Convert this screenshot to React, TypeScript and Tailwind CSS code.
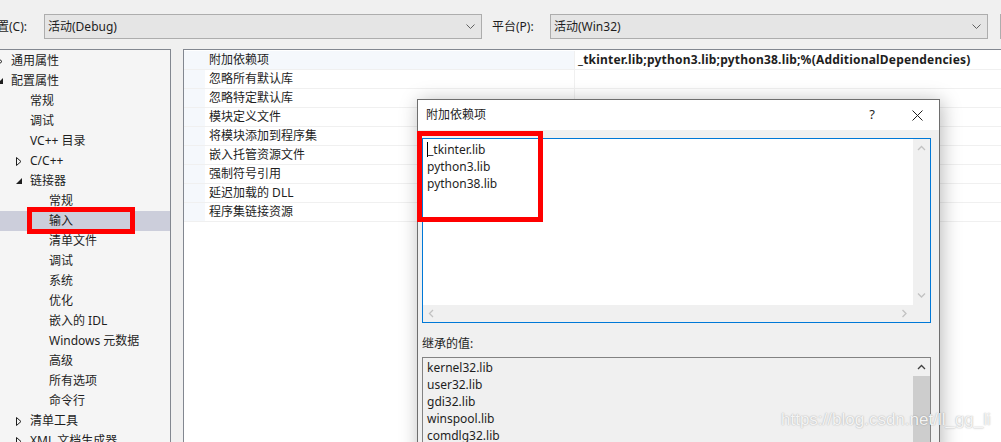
import React from "react";

type Dir = "up" | "down" | "left" | "right";

const Chevron = ({ dir, color }: { dir: Dir; color: string }) => {
  const d = {
    up: "M1 5 L4.5 1.5 L8 5",
    down: "M1 1.5 L4.5 5 L8 1.5",
    left: "M5 1 L1.5 4.5 L5 8",
    right: "M1.5 1 L5 4.5 L1.5 8",
  }[dir];
  const vertical = dir === "up" || dir === "down";
  return (
    <svg
      width={vertical ? 9 : 7}
      height={vertical ? 7 : 9}
      viewBox={vertical ? "0 0 9 7" : "0 0 7 9"}
      fill="none"
    >
      <path d={d} stroke={color} strokeWidth="1.3" />
    </svg>
  );
};

type TreeItem = {
  label: string;
  level: 0 | 1 | 2;
  arrow?: "closed" | "open";
  selected?: boolean;
};

const tree: TreeItem[] = [
  { label: "通用属性", level: 0, arrow: "closed" },
  { label: "配置属性", level: 0, arrow: "open" },
  { label: "常规", level: 1 },
  { label: "调试", level: 1 },
  { label: "VC++ 目录", level: 1 },
  { label: "C/C++", level: 1, arrow: "closed" },
  { label: "链接器", level: 1, arrow: "open" },
  { label: "常规", level: 2 },
  { label: "输入", level: 2, selected: true },
  { label: "清单文件", level: 2 },
  { label: "调试", level: 2 },
  { label: "系统", level: 2 },
  { label: "优化", level: 2 },
  { label: "嵌入的 IDL", level: 2 },
  { label: "Windows 元数据", level: 2 },
  { label: "高级", level: 2 },
  { label: "所有选项", level: 2 },
  { label: "命令行", level: 2 },
  { label: "清单工具", level: 1, arrow: "closed" },
  { label: "XML 文档生成器", level: 1, arrow: "closed" },
];

const indent = ["-ml-[8px]", "ml-[11px]", "ml-[30px]"];

const props = [
  "附加依赖项",
  "忽略所有默认库",
  "忽略特定默认库",
  "模块定义文件",
  "将模块添加到程序集",
  "嵌入托管资源文件",
  "强制符号引用",
  "延迟加载的 DLL",
  "程序集链接资源",
];

const inherited = [
  "kernel32.lib",
  "user32.lib",
  "gdi32.lib",
  "winspool.lib",
  "comdlg32.lib",
  "advapi32.lib",
];

const Combo = ({ text }: { text: string }) => (
  <div className="w-[438px] h-[25px] border border-[#adadad] bg-[#e5e5e5] flex items-center justify-between pl-[3px] pr-[6px]">
    <span>{text}</span>
    <svg width="9" height="5" viewBox="0 0 9 5" fill="none">
      <path d="M0.5 0.5 L4.5 4.5 L8.5 0.5" stroke="#606060" strokeWidth="1" />
    </svg>
  </div>
);

const App = () => {
  return (
    <div className="relative w-[1001px] h-[442px] overflow-hidden bg-[#f0f0f0] text-[12px] text-[#1e1e1e] font-['Noto_Sans','Noto_Sans_CJK_SC',sans-serif]">
      {/* top bar */}
      <div className="flex items-start h-[49px] pt-[14px]">
        <div className="w-[44px] leading-[25px] whitespace-nowrap overflow-hidden">
          <span className="-ml-[15px]">配置(C):</span>
        </div>
        <Combo text="活动(Debug)" />
        <div className="ml-[10px] w-[58px] leading-[25px]">平台(P):</div>
        <Combo text="活动(Win32)" />
        <div className="ml-[12px] w-[1px] h-[25px] bg-[#adadad]" />
      </div>

      {/* main area */}
      <div className="flex h-[393px]">
        <div className="w-[171px] pt-px border-t border-r border-[#828790] bg-[#f5f5f5] overflow-hidden">
          {tree.map((item, i) => (
            <div
              key={i}
              className={`h-[20px] ${item.selected ? "bg-[#cccedb]" : ""}`}
            >
              <div className={`flex items-center h-[20px] whitespace-nowrap ${indent[item.level]}`}>
                <span className="w-[19px] pl-[5px] flex items-center">
                  {item.arrow === "closed" && (
                    <svg width="6" height="9" viewBox="0 0 6 9" fill="none">
                      <path d="M0.5 0.5 L5 4.5 L0.5 8.5 Z" stroke="#1e1e1e" strokeWidth="1" />
                    </svg>
                  )}
                  {item.arrow === "open" && (
                    <svg width="6" height="6" viewBox="0 0 6 6">
                      <path d="M6 0 L6 6 L0 6 Z" fill="#1e1e1e" />
                    </svg>
                  )}
                </span>
                <span>{item.label}</span>
              </div>
            </div>
          ))}
        </div>

        <div className="ml-[12px] flex-1 border-t border-l border-[#828790] bg-white">
          {props.map((p, i) => (
            <div
              key={i}
              className={`flex border-b border-[#f0f0f0] ${i === 0 ? "h-[20px] pt-px" : "h-[19px]"}`}
            >
              <div className="w-[21px] bg-[#f5f8fc]" />
              <div
                className={`w-[370px] pl-[4px] flex items-center border-r border-[#f0f0f0] ${
                  i === 0 ? "bg-[#f5f8fc]" : ""
                }`}
              >
                {p}
              </div>
              <div className="flex-1 pl-[3px] flex items-center font-bold whitespace-nowrap tracking-[0.2px]">
                {i === 0 ? "_tkinter.lib;python3.lib;python38.lib;%(AdditionalDependencies)" : ""}
              </div>
            </div>
          ))}
        </div>
      </div>

      {/* red mark on tree */}
      <div className="absolute left-[27px] top-[207px] w-[108px] h-[27px] border-[5px] border-[#ff0000]" />

      {/* dialog */}
      <div className="absolute left-[417px] top-[99px] w-[523px] h-[360px] border border-[#6e6e6e] bg-[#f0f0f0] shadow-[2px_2px_18px_rgba(0,0,0,0.28)]">
        <div className="h-[30px] bg-white flex items-center justify-between">
          <span className="pl-[8px]">附加依赖项</span>
          <div className="flex h-full">
            <div className="w-[46px] flex items-center justify-center text-[13px]">?</div>
            <div className="w-[44px] flex items-center justify-center">
              <svg width="11" height="11" viewBox="0 0 11 11" fill="none">
                <path d="M0.5 0.5 L10.5 10.5 M10.5 0.5 L0.5 10.5" stroke="#1e1e1e" strokeWidth="1" />
              </svg>
            </div>
          </div>
        </div>

        <div className="pt-[8px] pl-[4px] pr-[8px]">
          {/* edit box */}
          <div className="h-[185px] border border-[#0078d7] flex flex-col">
            <div className="flex flex-1">
              <div className="flex-1 bg-white pl-[4px] pt-[2px] leading-[17px]">
                <div className="flex items-center">
                  <span className="w-px h-[15px] bg-black" />
                  <span>_tkinter.lib</span>
                </div>
                <div>python3.lib</div>
                <div>python38.lib</div>
              </div>
              <div className="w-[17px] bg-[#f0f0f0] flex flex-col justify-between items-center py-[6px]">
                <Chevron dir="up" color="#c2c2c2" />
                <Chevron dir="down" color="#c2c2c2" />
              </div>
            </div>
            <div className="h-[17px] flex">
              <div className="flex-1 flex items-center justify-between px-[5px]">
                <Chevron dir="left" color="#c2c2c2" />
                <Chevron dir="right" color="#c2c2c2" />
              </div>
              <div className="w-[17px]" />
            </div>
          </div>

          <div className="mt-[11px] h-[20px] leading-[20px]">继承的值:</div>

          <div className="mt-[3px] h-[120px] border border-[#828282] flex">
            <div className="flex-1 pl-[4px] pt-[1px] leading-[17px]">
              {inherited.map((lib) => (
                <div key={lib}>{lib}</div>
              ))}
            </div>
            <div className="w-[17px] flex flex-col items-center">
              <div className="h-[18px] flex items-center">
                <Chevron dir="up" color="#404040" />
              </div>
              <div className="w-full flex-1 bg-[#cdcdcd]" />
            </div>
          </div>
        </div>
      </div>

      {/* red mark on dialog */}
      <div className="absolute left-[417px] top-[131px] w-[126px] h-[91px] border-[5px] border-[#ff0000]" />

      {/* watermark */}
      <div className="absolute left-[781px] top-[409px] text-[17px] leading-[22px] whitespace-nowrap font-['Liberation_Sans',sans-serif] text-[#f4f4f4] [text-shadow:0_0_1.5px_rgba(0,0,0,0.35)]">
        https://blog.csdn.net/ll_gg_li
      </div>
    </div>
  );
};

export default App;
